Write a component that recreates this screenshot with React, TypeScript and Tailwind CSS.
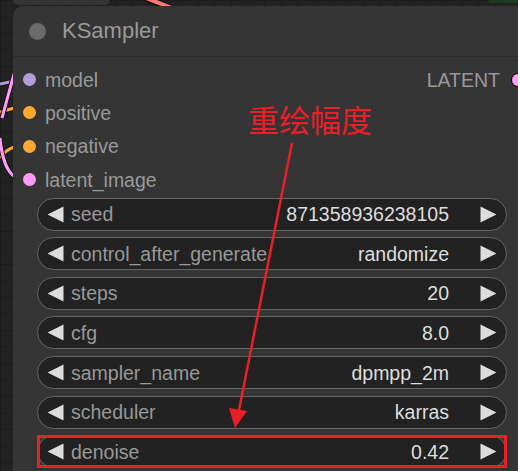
import React from "react";

const inputs = [
  { name: "model", color: "bg-[#b39ddb]" },
  { name: "positive", color: "bg-[#ffa931]" },
  { name: "negative", color: "bg-[#ffa931]" },
  { name: "latent_image", color: "bg-[#ff9cf9]" },
];

const widgets = [
  { label: "seed", value: "871358936238105" },
  { label: "control_after_generate", value: "randomize" },
  { label: "steps", value: "20" },
  { label: "cfg", value: "8.0" },
  { label: "sampler_name", value: "dpmpp_2m" },
  { label: "scheduler", value: "karras" },
  { label: "denoise", value: "0.42", marked: true },
];

function LeftArrow() {
  return (
    <svg width="17" height="17" viewBox="0 0 17 17" className="shrink-0">
      <polygon points="16.5,0.5 16.5,16.5 0.5,8.5" fill="#dddddd" />
    </svg>
  );
}

function RightArrow() {
  return (
    <svg width="17" height="17" viewBox="0 0 17 17" className="shrink-0">
      <polygon points="0.5,0.5 0.5,16.5 16.5,8.5" fill="#dddddd" />
    </svg>
  );
}

function Widget({ label, value, marked }: { label: string; value: string; marked?: boolean }) {
  return (
    <div className="relative h-[33px] shrink-0">
      <div className="flex h-full items-center rounded-full border-[1.5px] border-[#666] bg-[#222] pl-[9px] pr-[9px]">
        <LeftArrow />
        <span className="ml-[7px] min-w-0 flex-1 overflow-hidden whitespace-nowrap text-[19.5px] leading-[24px] text-[#999]">
          {label}
        </span>
        <span className="whitespace-nowrap text-[19.5px] leading-[24px] text-[#ddd]">{value}</span>
        <div className="ml-[31px]">
          <RightArrow />
        </div>
      </div>
      {marked && <div className="absolute inset-0 border-[3px] border-[#e8202a]" />}
    </div>
  );
}

export default function App() {
  return (
    <div className="relative h-[471px] w-[518px] overflow-hidden bg-[#222] bg-[linear-gradient(#1b1b1b_1px,transparent_1px),linear-gradient(90deg,#1b1b1b_1px,transparent_1px)] bg-[size:16.5px_16.5px] font-['Liberation_Sans',Arial,sans-serif]">
      {/* wires behind the node */}
      <svg className="absolute left-0 top-0" width="518" height="471">
        <path d="M0 84 L14 81" stroke="#111" strokeWidth="5" fill="none" />
        <path d="M0 84 L14 81" stroke="#b39ddb" strokeWidth="3" fill="none" />
        <path d="M0 112 L14 108" stroke="#111" strokeWidth="5" fill="none" />
        <path d="M0 112 L14 108" stroke="#ffa931" strokeWidth="3" fill="none" />
        <path d="M0 158 C4 152 8 149 14 147" stroke="#111" strokeWidth="5" fill="none" />
        <path d="M0 158 C4 152 8 149 14 147" stroke="#ffa931" strokeWidth="3" fill="none" />
        <path d="M2 118 L14 74" stroke="#111" strokeWidth="5" fill="none" />
        <path d="M2 118 L14 74" stroke="#ff9cf9" strokeWidth="3" fill="none" />
        <path d="M0 138 C2 160 8 172 14 176" stroke="#111" strokeWidth="5" fill="none" />
        <path d="M0 138 C2 160 8 172 14 176" stroke="#ff9cf9" strokeWidth="3" fill="none" />
        <path d="M146 -2 L172 8" stroke="#111" strokeWidth="7" fill="none" />
        <path d="M146 -2 L172 8" stroke="#f77" strokeWidth="4" fill="none" />
      </svg>
      <div className="absolute left-[13px] top-0 h-[5px] w-[97px] rounded-b-[6px] bg-[#353535]" />
      <div className="absolute left-[488px] top-0 h-[3px] w-[40px] rounded-bl-[6px] bg-[#1f3a22]" />

      <div className="relative flex pl-[13px] pt-[6px]">
        <div className="flex h-[480px] w-[518px] shrink-0 flex-col rounded-tl-[10px] bg-[#353535]">
          {/* title */}
          <div className="flex h-[51px] shrink-0 items-center border-b border-[#2b2b2b] pl-[16px]">
            <div className="h-[17px] w-[17px] rounded-full bg-[#6b6b6b]" />
            <span className="ml-[16px] text-[22px] leading-none text-[#9a9a9a]">KSampler</span>
          </div>

          {/* inputs and output */}
          <div className="flex pt-[6px]">
            <div className="flex flex-1 flex-col">
              {inputs.map((inp) => (
                <div key={inp.name} className="flex h-[33.3px] items-center pl-[9.5px]">
                  <div className={`h-[13px] w-[13px] rounded-full ${inp.color}`} />
                  <span className="ml-[9.5px] text-[19.5px] leading-[24px] text-[#9a9a9a]">{inp.name}</span>
                </div>
              ))}
            </div>
            <div className="flex h-[33.3px] items-center pr-[6px]">
              <span className="text-[19.5px] leading-[24px] text-[#9a9a9a]">LATENT</span>
              <div className="ml-[11px] h-[14px] w-[14px] rounded-full border border-black bg-[#ff9cf9]" />
            </div>
          </div>

          {/* widgets */}
          <div className="mt-[1.5px] flex flex-col gap-[6.6px] px-[24px]">
            {widgets.map((w) => (
              <Widget key={w.label} label={w.label} value={w.value} marked={w.marked} />
            ))}
          </div>
        </div>
      </div>

      {/* annotation */}
      <div className="absolute left-[248px] top-[103px] text-[31px] leading-none text-[#e8202a] font-['Noto_Sans_CJK_SC',sans-serif]">
        重绘幅度
      </div>
      <svg className="absolute left-0 top-0" width="518" height="471">
        <line x1="292" y1="143" x2="239" y2="410" stroke="#e8202a" strokeWidth="2.5" />
        <polygon points="235,428 229,408 247,411" fill="#e8202a" />
      </svg>
    </div>
  );
}
